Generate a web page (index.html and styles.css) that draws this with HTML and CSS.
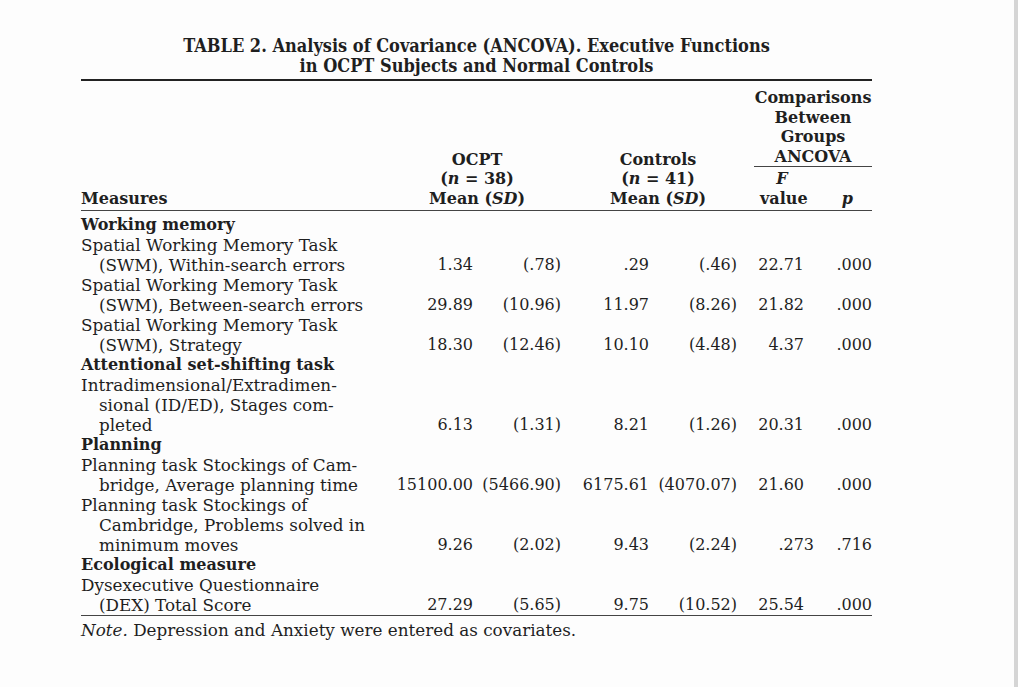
FILE: index.html
```html
<!DOCTYPE html>
<html lang="en">
<head>
    <meta charset="UTF-8">
    <meta name="viewport" content="width=device-width, initial-scale=1.0">
    <title>Table 2. ANCOVA</title>
    <link rel="stylesheet" href="styles.css">
</head>
<body>
    <div class="page">
        <div class="table-block">
            <h2 class="table-title">TABLE 2. Analysis of Covariance (ANCOVA). Executive Functions<br>in OCPT Subjects and Normal Controls</h2>

            <table class="stats-table">
                <colgroup>
                    <col class="col-measure">
                    <col class="col-num">
                    <col class="col-num">
                    <col class="col-num">
                    <col class="col-num">
                    <col class="col-f">
                    <col class="col-p">
                </colgroup>
                <thead>
                    <tr>
                        <th class="head-measure" rowspan="2">Measures</th>
                        <th class="head-group" colspan="2" rowspan="2">OCPT<br>(<i>n</i> = 38)<br>Mean (<i>SD</i>)</th>
                        <th class="head-group head-controls" colspan="2" rowspan="2">Controls<br>(<i>n</i> = 41)<br>Mean (<i>SD</i>)</th>
                        <th class="head-compare" colspan="2">
                            <span class="compare-label">Comparisons<br>Between<br>Groups<br>ANCOVA</span>
                        </th>
                    </tr>
                    <tr>
                        <th class="head-f"><i>F</i><br>value</th>
                        <th class="head-p"><i>p</i></th>
                    </tr>
                </thead>
                <tbody>
                    <tr class="first-row">
                        <td class="measure section" colspan="7">Working memory</td>
                    </tr>
                    <tr>
                        <td class="measure">Spatial Working Memory Task<br><span class="wrap">(SWM), Within-search errors</span></td>
                        <td>1.34</td>
                        <td>(.78)</td>
                        <td>.29</td>
                        <td>(.46)</td>
                        <td>22.71</td>
                        <td>.000</td>
                    </tr>
                    <tr>
                        <td class="measure">Spatial Working Memory Task<br><span class="wrap">(SWM), Between-search errors</span></td>
                        <td>29.89</td>
                        <td>(10.96)</td>
                        <td>11.97</td>
                        <td>(8.26)</td>
                        <td>21.82</td>
                        <td>.000</td>
                    </tr>
                    <tr>
                        <td class="measure">Spatial Working Memory Task<br><span class="wrap">(SWM), Strategy</span></td>
                        <td>18.30</td>
                        <td>(12.46)</td>
                        <td>10.10</td>
                        <td>(4.48)</td>
                        <td>4.37</td>
                        <td>.000</td>
                    </tr>
                    <tr>
                        <td class="measure section" colspan="7">Attentional set-shifting task</td>
                    </tr>
                    <tr>
                        <td class="measure">Intradimensional/Extradimen-<br><span class="wrap">sional (ID/ED), Stages com-</span><br><span class="wrap">pleted</span></td>
                        <td>6.13</td>
                        <td>(1.31)</td>
                        <td>8.21</td>
                        <td>(1.26)</td>
                        <td>20.31</td>
                        <td>.000</td>
                    </tr>
                    <tr>
                        <td class="measure section" colspan="7">Planning</td>
                    </tr>
                    <tr>
                        <td class="measure">Planning task Stockings of Cam-<br><span class="wrap">bridge, Average planning time</span></td>
                        <td>15100.00</td>
                        <td>(5466.90)</td>
                        <td>6175.61</td>
                        <td>(4070.07)</td>
                        <td>21.60</td>
                        <td>.000</td>
                    </tr>
                    <tr>
                        <td class="measure">Planning task Stockings of<br><span class="wrap">Cambridge, Problems solved in</span><br><span class="wrap">minimum moves</span></td>
                        <td>9.26</td>
                        <td>(2.02)</td>
                        <td>9.43</td>
                        <td>(2.24)</td>
                        <td class="shift">.273</td>
                        <td>.716</td>
                    </tr>
                    <tr>
                        <td class="measure section" colspan="7">Ecological measure</td>
                    </tr>
                    <tr class="last-row">
                        <td class="measure">Dysexecutive Questionnaire<br><span class="wrap">(DEX) Total Score</span></td>
                        <td>27.29</td>
                        <td>(5.65)</td>
                        <td>9.75</td>
                        <td>(10.52)</td>
                        <td>25.54</td>
                        <td>.000</td>
                    </tr>
                </tbody>
            </table>

            <p class="table-note"><i>Note.</i> Depression and Anxiety were entered as covariates.</p>
        </div>
    </div>
</body>
</html>
```

FILE: styles.css
```css
* {
    margin: 0;
    padding: 0;
    box-sizing: border-box;
}

html,
body {
    height: 100%;
}

body {
    background-color: #fdfdfd;
    color: #1f1f1f;
    font-family: "DejaVu Serif", "Liberation Serif", serif;
    font-size: 16.8px;
    line-height: 20px;
    border-right: 4px solid #d5d5d5;
}

.page {
    padding: 36px 0 0 81px;
}

.table-block {
    width: 791px;
}

.table-title {
    font-family: "DejaVu Serif Condensed", "DejaVu Serif", serif;
    font-stretch: condensed;
    font-size: 18px;
    font-weight: bold;
    line-height: 20px;
    text-align: center;
    padding-bottom: 3px;
}

.stats-table {
    width: 100%;
    border-collapse: collapse;
    table-layout: fixed;
    border-top: 2px solid #222;
    border-bottom: 1px solid #444;
}

.col-measure { width: 304px; }
.col-num { width: 88px; }
.col-f { width: 67px; }
.col-p { width: 68px; }

th {
    font-size: 16px;
    font-weight: bold;
    vertical-align: bottom;
    text-align: center;
    line-height: 19.5px;
    white-space: nowrap;
}

thead tr:last-child th,
.head-measure,
.head-group {
    border-bottom: 1px solid #444;
}

.head-measure {
    text-align: left;
    padding-bottom: 2px;
}

.head-group {
    padding-bottom: 2px;
    padding-left: 8px;
}

.head-controls {
    padding-left: 18px;
}

.head-compare {
    padding-top: 7px;
    padding-left: 17px;
}

.compare-label {
    display: block;
    border-bottom: 1px solid #444;
}

.head-f {
    padding: 2px 0 2px 23px;
}

.head-p {
    text-align: right;
    padding: 2px 19px 2px 0;
}

td {
    font-size: 16px;
    text-align: right;
    vertical-align: bottom;
    white-space: nowrap;
}

td.measure {
    font-size: 16.8px;
    text-align: left;
}

td.section {
    font-size: 16px;
    font-weight: bold;
}

.first-row td {
    padding-top: 4px;
}

.wrap {
    padding-left: 18px;
}

.shift {
    position: relative;
    left: 10px;
}

.table-note {
    padding-top: 4px;
}
```
